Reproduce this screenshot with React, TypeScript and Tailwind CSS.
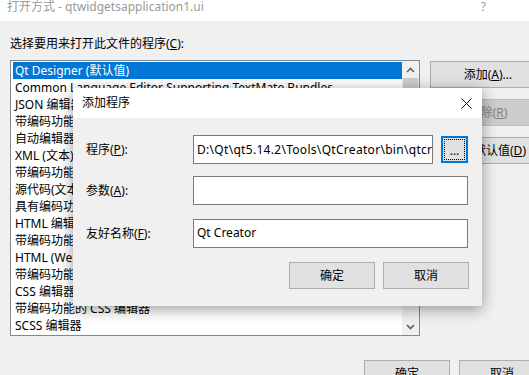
import { ReactNode } from "react"

const font = { fontFamily: '"Noto Sans", "Noto Sans CJK SC", sans-serif' }

const items = [
  "Qt Designer (默认值)",
  "Common Language Editor Supporting TextMate Bundles",
  "JSON 编辑器",
  "带编码功能的 JSON 编辑器",
  "自动编辑器选择器(XML)",
  "XML (文本)编辑器",
  "带编码功能的 XML (文本)编辑器",
  "源代码(文本)编辑器",
  "具有编码功能的源代码(文本)编辑器",
  "HTML 编辑器",
  "带编码功能的 HTML 编辑器",
  "HTML (Web 窗体)编辑器",
  "带编码功能的 HTML (Web 窗体)编辑器",
  "CSS 编辑器",
  "带编码功能的 CSS 编辑器",
  "SCSS 编辑器",
]

function Btn({ children, w, disabled }: { children: ReactNode; w: string; disabled?: boolean }) {
  return (
    <div
      className={`${w} h-[27px] shrink-0 flex items-center justify-center border text-[12px] ${
        disabled
          ? "bg-[#cccccc] border-[#bfbfbf] text-[#838383]"
          : "bg-[#e1e1e1] border-[#adadad] text-black"
      }`}
    >
      {children}
    </div>
  )
}

function Chevron({ down }: { down?: boolean }) {
  return (
    <svg width="9" height="6" viewBox="0 0 9 6">
      <polyline
        points={down ? "1,1 4.5,4.5 8,1" : "1,5 4.5,1.5 8,5"}
        fill="none"
        stroke="#606060"
        strokeWidth="1.6"
      />
    </svg>
  )
}

function AddProgramDialog() {
  return (
    <div className="absolute left-[73px] top-[88px] w-[409px] h-[218px] bg-[#f0f0f0] shadow-[0_3px_14px_rgba(0,0,0,0.4)] flex flex-col">
      <div className="h-[30px] bg-white flex items-center justify-between pl-[9px] pr-[10px]">
        <span className="text-[12px] text-black">添加程序</span>
        <svg width="11" height="11" viewBox="0 0 11 11">
          <path d="M0.5 0.5 L10.5 10.5 M10.5 0.5 L0.5 10.5" stroke="#111" strokeWidth="1" />
        </svg>
      </div>
      <div className="flex flex-col pl-[13px] pt-[17px] text-[12px]">
        <div className="flex items-center h-[29px]">
          <span className="w-[107px]">
            程序(<u>P</u>):
          </span>
          <div className="w-[240px] h-[29px] bg-white border border-[#7a7a7a] flex items-center pl-[3px] overflow-hidden whitespace-nowrap tracking-[0.3px]">
            D:\Qt\qt5.14.2\Tools\QtCreator\bin\qtcreator.exe
          </div>
          <div className="ml-[8px] w-[27px] h-[27px] border-2 border-[#0078d7] bg-[#e1e1e1] p-[1px]">
            <div className="w-full h-full border border-dotted border-black flex items-end justify-center pb-[3px] leading-[10px]">
              ...
            </div>
          </div>
        </div>
        <div className="flex items-center h-[29px] mt-[12px]">
          <span className="w-[107px]">
            参数(<u>A</u>):
          </span>
          <div className="w-[275px] h-[29px] bg-white border border-[#7a7a7a]" />
        </div>
        <div className="flex items-center h-[29px] mt-[14px]">
          <span className="w-[107px]">
            友好名称(<u>F</u>):
          </span>
          <div className="w-[275px] h-[29px] bg-white border border-[#7a7a7a] flex items-center pl-[3px] pb-[2px]">
            Qt Creator
          </div>
        </div>
        <div className="flex gap-[8px] mt-[14px] pl-[203px]">
          <Btn w="w-[86px]">确定</Btn>
          <Btn w="w-[86px]">取消</Btn>
        </div>
      </div>
    </div>
  )
}

export default function App() {
  return (
    <div className="relative w-[529px] h-[375px] overflow-hidden bg-[#f0f0f0] text-black" style={font}>
      <div className="h-[21px] bg-white flex items-start justify-between pl-[7px] pr-[43px] text-[12px] leading-[14px] text-[#9a9a9a]">
        <span>打开方式 - qtwidgetsapplication1.ui</span>
        <span>?</span>
      </div>

      <div className="pl-[10px] pt-[16px]">
        <div className="text-[12px] leading-[14px]">
          选择要用来打开此文件的程序(<u>C</u>):
        </div>

        <div className="flex gap-[10px] mt-[9px]">
          <div className="w-[410px] h-[276px] shrink-0 border border-[#828790] bg-white flex">
            <div className="flex-1 pt-[1px] pl-[2px] overflow-hidden text-[12px]">
              {items.map((it, i) => (
                <div
                  key={it}
                  className={`h-[17px] leading-[17px] pl-[2px] whitespace-nowrap ${
                    i === 0 ? "bg-[#0078d7] text-white" : ""
                  }`}
                >
                  {it}
                </div>
              ))}
            </div>
            <div className="w-[17px] bg-[#f0f0f0] flex flex-col">
              <div className="h-[17px] flex items-center justify-center">
                <Chevron />
              </div>
              <div className="mx-[1px] h-[50px] bg-[#cdcdcd]" />
              <div className="flex-1" />
              <div className="h-[17px] flex items-center justify-center">
                <Chevron down />
              </div>
            </div>
          </div>

          <div className="flex flex-col gap-[11px] pt-[1px]">
            <Btn w="w-[116px]">
              添加(<u>A</u>)...
            </Btn>
            <Btn w="w-[116px]" disabled>
              删除(<u>R</u>)
            </Btn>
            <Btn w="w-[116px]">
              设为默认值(<u>D</u>)
            </Btn>
          </div>
        </div>

        <div className="flex gap-[9px] mt-[24px] pl-[354px]">
          <Btn w="w-[86px]">确定</Btn>
          <Btn w="w-[86px]">取消</Btn>
        </div>
      </div>

      <AddProgramDialog />
    </div>
  )
}
